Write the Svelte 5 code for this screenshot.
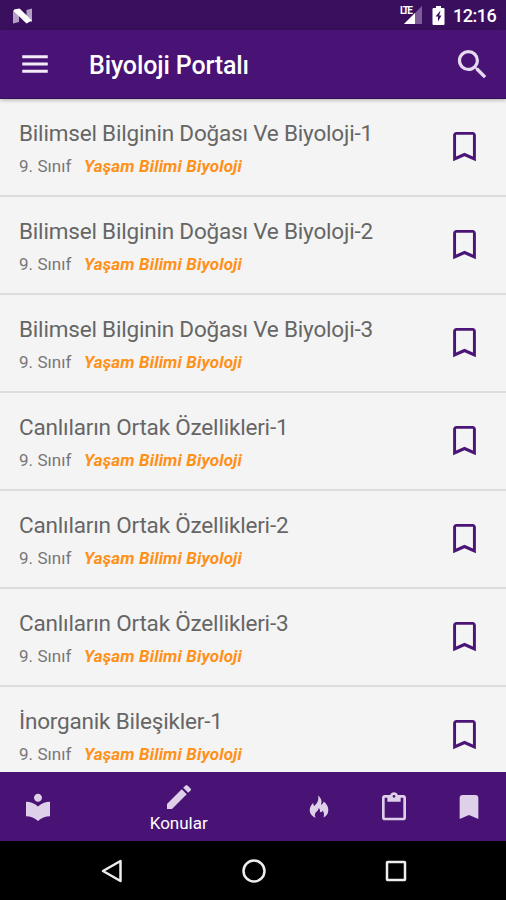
<script>
  const lessons = [
    'Bilimsel Bilginin Doğası Ve Biyoloji-1',
    'Bilimsel Bilginin Doğası Ve Biyoloji-2',
    'Bilimsel Bilginin Doğası Ve Biyoloji-3',
    'Canlıların Ortak Özellikleri-1',
    'Canlıların Ortak Özellikleri-2',
    'Canlıların Ortak Özellikleri-3',
    'İnorganik Bileşikler-1',
  ];
</script>

<div class="screen">
  <div class="status">
    <svg class="nougat" width="20" height="16" viewBox="0 0 20 16">
      <path d="M0 2L6 5V14L0 15.5ZM13.5 2L19 .5V14L13.5 11Z" fill="#b3a0c4" />
      <path d="M1 1.5L6.5 .5L19 12.5L13.5 15.5L1 3.5Z" fill="#fff" />
    </svg>
    <div class="indicators">
      <div class="network">
        <span class="lte">LTE</span>
        <svg width="18" height="18" viewBox="0 0 18 18">
          <path d="M18 0V18H0Z" fill="#7e5b99" />
          <path d="M11 7V18H0Z" fill="#fff" />
        </svg>
      </div>
      <svg class="battery" width="13" height="19" viewBox="0 0 13 19">
        <path d="M4 0H9V2H11.5Q12.5 2 12.5 3V18Q12.5 19 11.5 19H1.5Q.5 19 .5 18V3Q.5 2 1.5 2H4Z" fill="#fff" />
        <path d="M8.5 4.5L3.5 10.5H6V15.5L9.5 9.5H7.2Z" fill="#3a105e" />
      </svg>
      <span class="clock">12:16</span>
    </div>
  </div>

  <header>
    <svg class="menu" width="34" height="34" viewBox="0 0 24 24" fill="#f3ecf8">
      <path d="M3 18.2h18v-2.2H3v2.2zm0-5.1h18v-2.2H3v2.2zm0-7.3v2.2h18V5.8H3z" />
    </svg>
    <h1>Biyoloji Portalı</h1>
    <svg class="search" width="39" height="39" viewBox="0 0 24 24" fill="#e6daf0">
      <path d="M15.5 14h-.79l-.28-.27A6.471 6.471 0 0 0 16 9.5 6.5 6.5 0 1 0 9.5 16c1.61 0 3.09-.59 4.23-1.57l.27.28v.79l5 4.99L20.49 19l-4.99-5zm-6 0C7.01 14 5 11.99 5 9.5S7.01 5 9.5 5 14 7.01 14 9.5 11.99 14 9.5 14z" />
    </svg>
  </header>

  <main>
    {#each lessons as title}
      <article>
        <div class="text">
          <h2>{title}</h2>
          <p><span>9. Sınıf</span><em>Yaşam Bilimi Biyoloji</em></p>
        </div>
        <svg width="39" height="39" viewBox="0 0 24 24" fill="#4b1578">
          <path d="M17 3H7c-1.1 0-2 .9-2 2v16l7-3 7 3V5c0-1.1-.9-2-2-2zm.2 15.2-5.2-2.3-5.2 2.3V4.8h10.4z" />
        </svg>
      </article>
    {/each}
  </main>

  <nav>
    <div class="tab side">
      <svg width="32" height="32" viewBox="0 0 24 24">
        <path d="M12 11.55C9.64 9.35 6.48 8 3 8v11c3.48 0 6.64 1.35 9 3.55 2.36-2.19 5.52-3.55 9-3.55V8c-3.48 0-6.64 1.35-9 3.55zM12 8c1.66 0 3-1.34 3-3s-1.34-3-3-3-3 1.34-3 3 1.34 3 3 3z" />
      </svg>
    </div>
    <div class="tab active">
      <svg width="32" height="32" viewBox="0 0 24 24">
        <path d="M3 17.25V21h3.75L17.81 9.94l-3.75-3.75L3 17.25zM20.71 7.04a1 1 0 0 0 0-1.41l-2.34-2.34a1 1 0 0 0-1.41 0l-1.83 1.83 3.75 3.75 1.83-1.83z" />
      </svg>
      <span>Konular</span>
    </div>
    <div class="tab side">
      <svg width="20" height="24" viewBox="0 0 20 24">
        <path d="M9 .5C12.5 3.5 13.2 6 12 10C13.5 9.3 14.5 8 14.7 6.5C18 9 19.5 12 19.3 15.5C19.1 19 17.5 21.2 14.5 22.5C15.3 20 15.2 17.5 13.7 15.8C12.9 17 12 17.3 10.8 17.2C11.4 15.3 11 13.8 9.4 13.2C9.5 16 6.6 16.6 6 19C5.7 20.4 6 21.5 6.7 22.8C3 21.5 .7 18.5 .7 15.1C.7 12 2.5 9.8 4.3 7.8C4.3 9.5 4.5 10.3 5.2 11C8.2 8.5 10.2 5 9 .5Z" />
      </svg>
    </div>
    <div class="tab side">
      <svg width="32" height="32" viewBox="0 0 24 24">
        <path d="M19 3h-4.18C14.4 1.84 13.3 1 12 1c-1.3 0-2.4.84-2.82 2H5c-1.1 0-2 .9-2 2v15c0 1.1.9 2 2 2h14c1.1 0 2-.9 2-2V5c0-1.1-.9-2-2-2zm-7 0c.55 0 1 .45 1 1s-.45 1-1 1-1-.45-1-1 .45-1 1-1zm7 17H5V5h2v3h10V5h2v15z" />
      </svg>
    </div>
    <div class="tab side">
      <svg width="32" height="32" viewBox="0 0 24 24">
        <path d="M17 3H7c-1.1 0-2 .9-2 2v16l7-3 7 3V5c0-1.1-.9-2-2-2z" />
      </svg>
    </div>
  </nav>

  <footer>
    <svg width="24" height="26" viewBox="0 0 24 26"><path d="M20.5 3V23L3 13Z" /></svg>
    <svg width="26" height="26" viewBox="0 0 26 26"><circle cx="13" cy="13" r="10.5" /></svg>
    <svg width="24" height="24" viewBox="0 0 24 24"><rect x="3" y="3" width="18" height="18" rx=".5" /></svg>
  </footer>
</div>

<style>
  :global(body) {
    margin: 0;
  }
  .screen {
    width: 506px;
    height: 900px;
    display: flex;
    flex-direction: column;
    overflow: hidden;
    background: #f4f4f4;
    font-family: Roboto, "Noto Sans", sans-serif;
  }
  svg {
    display: block;
    flex: none;
  }
  .status {
    height: 30px;
    flex: none;
    display: flex;
    justify-content: space-between;
    align-items: flex-start;
    padding: 0 8px 0 13px;
    background: #3a105e;
  }
  .nougat {
    margin-top: 7.5px;
  }
  .indicators {
    display: flex;
    align-items: flex-start;
  }
  .network {
    position: relative;
    margin: 6px 10px 0 0;
  }
  .lte {
    position: absolute;
    left: -4px;
    top: 0;
    font-size: 10px;
    line-height: 10px;
    font-weight: 700;
    letter-spacing: -1.6px;
    color: #fff;
  }
  .battery {
    margin: 6px 8px 0 0;
  }
  .clock {
    width: 45px;
    font-size: 18px;
    line-height: 31px;
    font-weight: 500;
    letter-spacing: -0.5px;
    color: #fff;
  }
  header {
    position: relative;
    z-index: 1;
    height: 69px;
    flex: none;
    box-sizing: border-box;
    display: flex;
    align-items: center;
    padding: 0 14.5px 0 18px;
    background: #481375;
    border-bottom: 1px solid #35105a;
    box-shadow: 0 1px 4px rgba(0, 0, 0, 0.3);
  }
  h1 {
    flex: 1;
    margin: 4px 0 0 37px;
    font-size: 25px;
    line-height: 30px;
    font-weight: 500;
    letter-spacing: -0.12px;
    color: #fff;
  }
  main {
    flex: 1;
    min-height: 0;
    overflow: hidden;
  }
  article {
    height: 98px;
    box-sizing: border-box;
    display: flex;
    justify-content: space-between;
    padding: 20px 22px 0 19px;
    border-bottom: 2px solid #dcdddd;
  }
  article svg {
    margin-top: 8px;
  }
  h2 {
    margin: 0;
    font-size: 22.5px;
    line-height: 28px;
    font-weight: 400;
    letter-spacing: -0.19px;
    color: #666;
  }
  p {
    margin: 8px 0 0;
    display: flex;
    gap: 12.5px;
    font-size: 17px;
    line-height: 22px;
    letter-spacing: 0.06px;
    color: #777;
  }
  em {
    font-weight: 700;
    letter-spacing: 0.12px;
    color: #ff9119;
  }
  nav {
    height: 69px;
    flex: none;
    box-sizing: border-box;
    display: flex;
    padding-left: 1px;
    background: #481375;
    fill: #ded0e9;
  }
  .tab {
    flex: 1;
    display: flex;
    flex-direction: column;
    align-items: center;
    justify-content: center;
  }
  .active {
    flex: 0 0 206px;
    justify-content: flex-start;
    padding-top: 9px;
  }
  .active span {
    font-size: 17px;
    line-height: 20px;
    color: #fff;
  }
  footer {
    height: 59px;
    flex: none;
    display: flex;
    justify-content: space-between;
    align-items: center;
    box-sizing: border-box;
    padding: 1px 98px 0 100px;
    background: #000;
    fill: none;
    stroke: #eee;
    stroke-width: 2.5;
    stroke-linejoin: round;
  }
</style>
